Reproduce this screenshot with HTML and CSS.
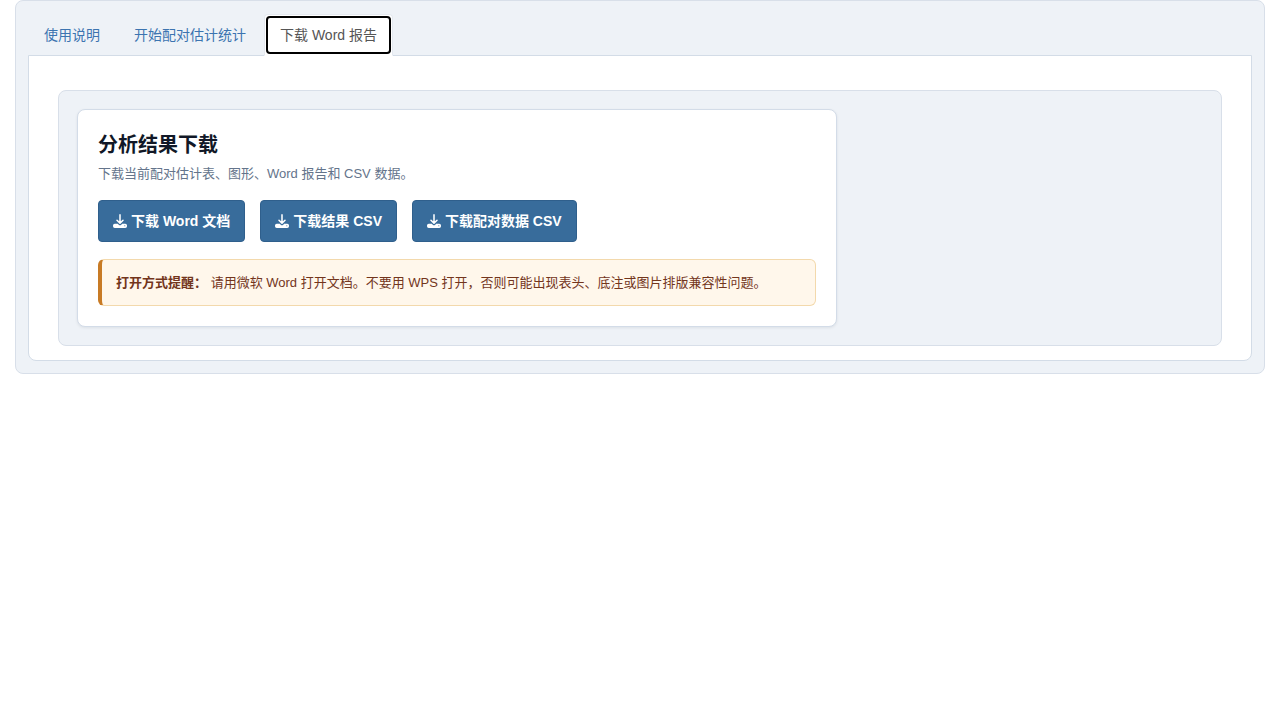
FILE: index.html
```html
<!DOCTYPE html>
<html lang="zh-CN">
<head>
    <meta charset="UTF-8">
    <meta name="viewport" content="width=device-width, initial-scale=1.0">
    <title>下载 Word 报告</title>
    <link rel="stylesheet" href="styles.css">
</head>
<body>
    <svg class="icon-defs" aria-hidden="true">
        <symbol id="icon-download" viewBox="0 0 512 512">
            <path d="M256 32v288M146 228l110 110 110-110" fill="none" stroke="currentColor" stroke-width="56" stroke-linecap="round" stroke-linejoin="round"/>
            <path fill="currentColor" fill-rule="evenodd" d="M64 352h110l37 37a64 64 0 0 0 90 0l37-37h110a64 64 0 0 1 64 64v32a64 64 0 0 1-64 64H64a64 64 0 0 1-64-64v-32a64 64 0 0 1 64-64zM432 412a20 20 0 1 0 0 40 20 20 0 0 0 0-40z"/>
        </symbol>
    </svg>
    <div class="well app">
        <ul class="nav-tabs">
            <li><a href="#help">使用说明</a></li>
            <li><a href="#stats">开始配对估计统计</a></li>
            <li class="active"><a href="#download">下载 Word 报告</a></li>
        </ul>
        <div class="tab-content" id="download">
            <div class="well download-panel">
                <div class="card">
                    <h3>分析结果下载</h3>
                    <p class="desc">下载当前配对估计表、图形、Word 报告和 CSV 数据。</p>
                    <div class="actions">
                        <button type="button" class="btn"><svg class="icon" aria-hidden="true"><use href="#icon-download"/></svg>下载 Word 文档</button>
                        <button type="button" class="btn"><svg class="icon" aria-hidden="true"><use href="#icon-download"/></svg>下载结果 CSV</button>
                        <button type="button" class="btn"><svg class="icon" aria-hidden="true"><use href="#icon-download"/></svg>下载配对数据 CSV</button>
                    </div>
                    <div class="notice">
                        <strong>打开方式提醒：</strong>
                        <span>请用微软 Word 打开文档。不要用 WPS 打开，否则可能出现表头、底注或图片排版兼容性问题。</span>
                    </div>
                </div>
            </div>
        </div>
    </div>
</body>
</html>
```
FILE: styles.css
```css
* {
    box-sizing: border-box;
}
body {
    margin: 0;
    padding: 0 15px;
    font-family: "Liberation Sans", "Noto Sans CJK SC", sans-serif;
    font-size: 14px;
    line-height: 20px;
    color: #111827;
    background-color: #fff;
}
.icon-defs {
    display: none;
}
.well {
    background-color: #eef2f7;
    border: 1px solid #d8dfe9;
    border-radius: 8px;
}
.app {
    padding: 13px 12px 12px;
}

/* Tabs */
.nav-tabs {
    display: flex;
    gap: 2px;
    margin: 0;
    padding: 0;
    list-style: none;
}
.nav-tabs li {
    margin-bottom: -1px;
}
.nav-tabs a {
    display: block;
    padding: 10px 15px;
    border: 1px solid transparent;
    border-radius: 4px 4px 0 0;
    color: #3c74b0;
    text-decoration: none;
}
.nav-tabs .active {
    position: relative;
}
.nav-tabs .active a {
    color: #555;
    background-color: #fff;
    border-color: #e4e9f0;
    border-bottom-color: #fff;
}
.nav-tabs .active a::after {
    content: "";
    position: absolute;
    inset: 2px;
    border: 2px solid #000;
    border-radius: 4px;
}
.tab-content {
    padding: 34px 29px 14px;
    background-color: #fff;
    border: 1px solid #d3dce7;
    border-radius: 0 0 8px 8px;
}

/* Download card */
.download-panel {
    padding: 18px;
}
.card {
    max-width: 760px;
    padding: 20px;
    background-color: #fff;
    border: 1px solid #d3dce8;
    border-radius: 8px;
    box-shadow: 0 1px 3px rgba(15, 23, 42, 0.08);
}
.card h3 {
    margin: 0 0 4px;
    font-size: 20px;
    line-height: 30px;
    font-weight: 700;
}
.desc {
    margin: 0 0 16px;
    font-size: 13px;
    color: #64748b;
}
.actions {
    display: flex;
    flex-wrap: wrap;
    gap: 15px;
    margin-bottom: 17px;
}
.btn {
    display: flex;
    align-items: center;
    gap: 4px;
    padding: 10px 14px;
    border: 1px solid #2f5f8c;
    border-radius: 4px;
    background-color: #386c9b;
    color: #fff;
    font-family: inherit;
    font-size: 14px;
    font-weight: 700;
    line-height: 20px;
    cursor: pointer;
}
.icon {
    width: 14px;
    height: 14px;
}
.notice {
    padding: 12px 14px;
    border: 1px solid #f3d9ac;
    border-left: 4px solid #c87b25;
    border-radius: 6px;
    background-color: #fff7eb;
    color: #73351c;
    font-size: 13px;
    line-height: 21px;
}
```
